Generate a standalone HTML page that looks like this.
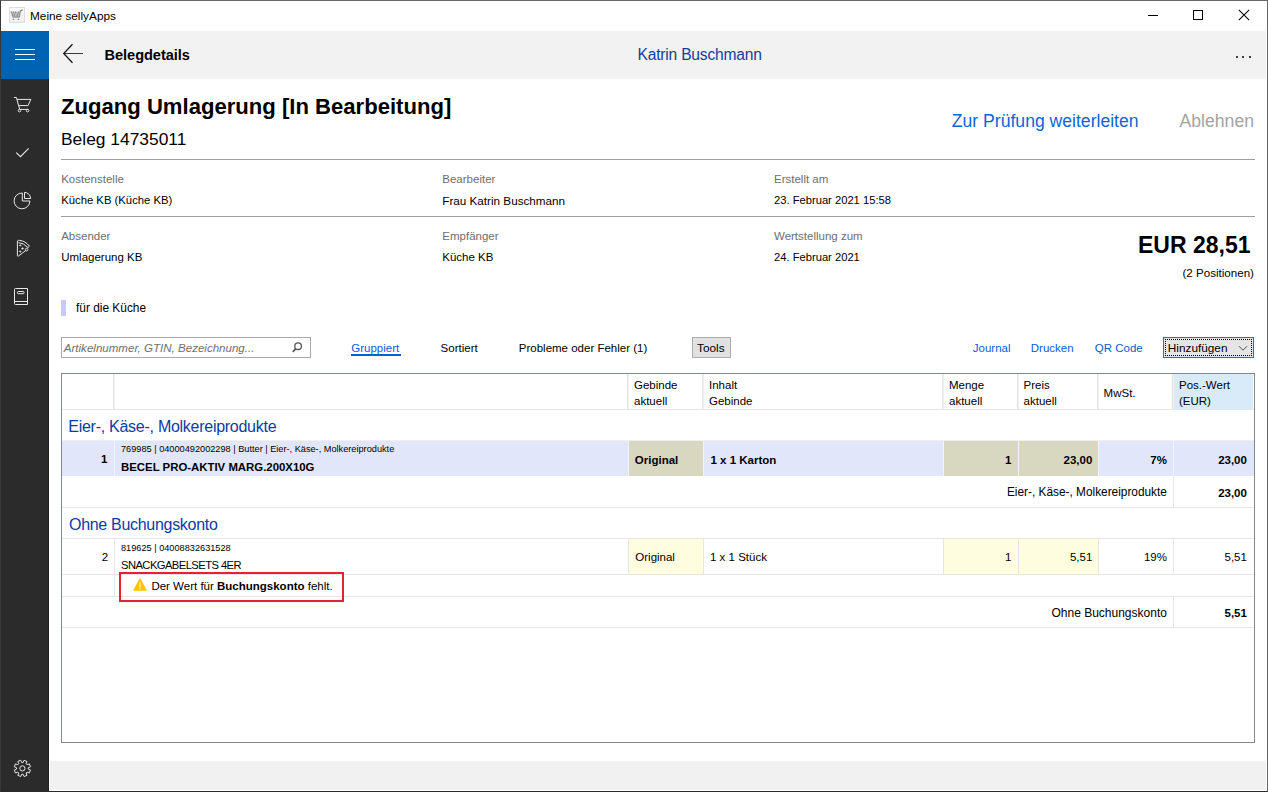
<!DOCTYPE html>
<html><head><meta charset="utf-8">
<style>
*{margin:0;padding:0}
html,body{width:1268px;height:792px;overflow:hidden;background:#fff}
body{font-family:"Liberation Sans",sans-serif;color:#000;position:relative}
.a{position:absolute;white-space:nowrap}
svg.a{overflow:visible}
</style></head><body>
<div class="a" style="left:0px;top:0px;width:1268px;height:792px;background:#fff;border:1px solid #686868;border-left-color:#383838;border-bottom-color:#2a2a2a;box-sizing:border-box"></div>
<svg class="a" style="left:9px;top:7px" width="16" height="16" viewBox="0 0 16 16"><defs><linearGradient id="g1" x1="0" y1="0" x2="0" y2="1"><stop offset="0" stop-color="#fafafa"/><stop offset="1" stop-color="#efefef"/></linearGradient></defs><rect x="0.5" y="0.5" width="15" height="15" fill="url(#g1)" stroke="#dedede"/><path d="M2 4.8 H10.9 L10.1 10.4 H3.5 Z" fill="#c4c4c4"/><g fill="#8e8e8e"><rect x="1.7" y="4.5" width="1.4" height="1.9"/><rect x="3.7" y="4.5" width="1.3" height="1.9"/><rect x="5.9" y="4.5" width="1.3" height="1.9"/><rect x="8.8" y="4.5" width="1.3" height="1.9"/><rect x="2.7" y="6.6" width="1.3" height="2.4"/><rect x="4.9" y="6.6" width="1.2" height="2.4"/><rect x="7.7" y="6.6" width="1.3" height="2.4"/><rect x="3.3" y="9.4" width="7.2" height="1.2"/><path d="M3.3 13 L4.4 11.2 L5.5 13 Z M8.3 13 L9.4 11.2 L10.5 13 Z"/></g><path d="M10.3 10.2 L11.4 4 Q11.7 3.1 13.9 3.2" fill="none" stroke="#8a8a8a" stroke-width="1.2"/></svg>
<div class="a" style="top:10.51px;font-size:11.8px;line-height:11.8px;color:#000;left:30.00px;">Meine sellyApps</div>
<div class="a" style="left:1148px;top:15px;width:10px;height:1px;background:#000;"></div>
<div class="a" style="left:1193px;top:10px;width:10px;height:10px;background:transparent;border:1px solid #000;box-sizing:border-box"></div>
<svg class="a" style="left:1238px;top:9px" width="12" height="12" viewBox="0 0 12 12"><path d="M0.8 0.8L11.2 11.2M11.2 0.8L0.8 11.2" stroke="#000" stroke-width="1.05"/></svg>
<div class="a" style="left:1px;top:31px;width:48px;height:760px;background:#2b2b2b;"></div>
<div class="a" style="left:48px;top:79px;width:1px;height:712px;background:#212121;"></div>
<div class="a" style="left:1px;top:31px;width:48px;height:48px;background:#0063b1;"></div>
<div class="a" style="left:49px;top:761px;width:1px;height:30px;background:#fff;"></div>
<div class="a" style="left:15px;top:49px;width:20px;height:1px;background:#fff;"></div>
<div class="a" style="left:15px;top:54px;width:20px;height:1px;background:#fff;"></div>
<div class="a" style="left:15px;top:59px;width:20px;height:1px;background:#fff;"></div>
<svg class="a" style="left:10px;top:92px" width="26" height="24" viewBox="0 0 26 24" fill="none" stroke="#e8e8e8" stroke-width="1"><path d="M3.9 5.5 H6.4 L9.7 17.4 H17.9"/><path d="M7 7.4 H20.9 L18 13.6 H9"/><circle cx="9.5" cy="18.6" r="1.3"/><circle cx="17.6" cy="18.6" r="1.3"/></svg>
<svg class="a" style="left:10px;top:140px" width="26" height="24" viewBox="0 0 26 24" fill="none" stroke="#e8e8e8" stroke-width="1.1"><path d="M6.2 12.6 L10.5 16.7 L18.6 8.3"/></svg>
<svg class="a" style="left:10px;top:188px" width="26" height="24" viewBox="0 0 26 24" fill="none" stroke="#e8e8e8" stroke-width="1"><path d="M12.3 5 A7.9 7.9 0 1 0 19.9 13 H12.3 Z"/><path d="M14.5 4.4 V10.5 H20.6 A6.1 6.1 0 0 0 14.5 4.4 Z"/></svg>
<svg class="a" style="left:10px;top:236px" width="26" height="24" viewBox="0 0 26 24" fill="none" stroke="#e8e8e8" stroke-width="1"><path d="M7.4 5 V19.6 Q7.6 20.6 8.5 20 L16 14.3"/><path d="M7.4 5 Q8 4.2 9.5 4.3 Q15.5 5 19.4 10.2 L17.9 11.6 Q14 7.2 8.5 6.6"/><circle cx="16.6" cy="13.6" r="1.3"/><path d="M10.3 8.7 l0.7 0.7 l-0.7 0.7 l-0.7 -0.7z M12.5 11.7 l0.8 0.8 l-0.8 0.8 l-0.8 -0.8z M10.3 14.8 l0.7 0.7 l-0.7 0.7 l-0.7 -0.7z" fill="#e8e8e8"/></svg>
<svg class="a" style="left:8px;top:284px" width="26" height="24" viewBox="0 0 26 24" fill="none" stroke="#e8e8e8" stroke-width="1"><path d="M7.5 4.5 H19.5 V20.5 H7.5 Q6.5 20.5 6.5 19.5 V5.5 Q6.5 4.5 7.5 4.5 Z"/><path d="M6.5 17.5 H19.5"/><rect x="9.5" y="7.5" width="6.5" height="2.2" rx="0.8"/></svg>
<svg class="a" style="left:10px;top:756px" width="26" height="24" viewBox="0 0 26 24" fill="none" stroke="#e8e8e8" stroke-width="1"><path d="M13.06 6.54 L14.07 4.27 L16.97 5.47 L16.08 7.79 L17.01 8.72 L19.33 7.83 L20.53 10.73 L18.26 11.74 L18.26 13.06 L20.53 14.07 L19.33 16.97 L17.01 16.08 L16.08 17.01 L16.97 19.33 L14.07 20.53 L13.06 18.26 L11.74 18.26 L10.73 20.53 L7.83 19.33 L8.72 17.01 L7.79 16.08 L5.47 16.97 L4.27 14.07 L6.54 13.06 L6.54 11.74 L4.27 10.73 L5.47 7.83 L7.79 8.72 L8.72 7.79 L7.83 5.47 L10.73 4.27 L11.74 6.54Z"/><circle cx="12.4" cy="12.4" r="2.6"/></svg>
<div class="a" style="left:50px;top:31px;width:1216px;height:48px;background:#f2f2f2;"></div>
<svg class="a" style="left:61px;top:41px" width="26" height="24" viewBox="0 0 26 24" fill="none" stroke="#111"><path d="M3.5 12.5 H22" stroke-width="1" stroke="#3c3c3c"/><path d="M11.5 3.3 L2.7 12.5 L11.5 21.7" stroke-width="1.25"/></svg>
<div class="a" style="top:48.14px;font-size:14.6px;line-height:14.6px;color:#000;font-weight:700;letter-spacing:-0.05px;left:104.50px;">Belegdetails</div>
<div class="a" style="top:47.29px;font-size:15.6px;line-height:15.6px;color:#123da6;letter-spacing:-0.2px;left:637.50px;">Katrin Buschmann</div>
<div class="a" style="left:1236px;top:56px;width:2px;height:2px;background:#000;border-radius:1px"></div>
<div class="a" style="left:1242px;top:56px;width:2px;height:2px;background:#000;border-radius:1px"></div>
<div class="a" style="left:1249px;top:56px;width:2px;height:2px;background:#000;border-radius:1px"></div>
<div class="a" style="left:50px;top:761px;width:1216px;height:29px;background:#f1f1f1;"></div>
<div class="a" style="top:95.79px;font-size:22.1px;line-height:22.1px;color:#000;font-weight:700;left:61.00px;">Zugang Umlagerung [In Bearbeitung]</div>
<div class="a" style="top:130.77px;font-size:17.4px;line-height:17.4px;color:#000;left:61.00px;">Beleg 14735011</div>
<div class="a" style="top:112.60px;font-size:17.6px;line-height:17.6px;color:#0a66d6;left:951.80px;">Zur Prüfung weiterleiten</div>
<div class="a" style="top:112.60px;font-size:17.6px;line-height:17.6px;color:#a3a3a3;left:1179.60px;">Ablehnen</div>
<div class="a" style="left:61px;top:159px;width:1194px;height:1px;background:#a0a0a0;"></div>
<div class="a" style="top:173.77px;font-size:11.5px;line-height:11.5px;color:#6e6e6e;left:61.20px;">Kostenstelle</div>
<div class="a" style="top:194.93px;font-size:11.3px;line-height:11.3px;color:#000;left:61.20px;">Küche KB (Küche KB)</div>
<div class="a" style="top:173.77px;font-size:11.5px;line-height:11.5px;color:#6e6e6e;left:442.30px;">Bearbeiter</div>
<div class="a" style="top:194.60px;font-size:11.7px;line-height:11.7px;color:#000;left:442.30px;">Frau Katrin Buschmann</div>
<div class="a" style="top:173.77px;font-size:11.5px;line-height:11.5px;color:#6e6e6e;left:774.00px;">Erstellt am</div>
<div class="a" style="top:195.02px;font-size:11.2px;line-height:11.2px;color:#000;left:774.00px;">23. Februar 2021 15:58</div>
<div class="a" style="left:61px;top:216px;width:1194px;height:1px;background:#a0a0a0;"></div>
<div class="a" style="top:230.77px;font-size:11.5px;line-height:11.5px;color:#6e6e6e;left:61.20px;">Absender</div>
<div class="a" style="top:251.77px;font-size:11.5px;line-height:11.5px;color:#000;left:61.20px;">Umlagerung KB</div>
<div class="a" style="top:230.77px;font-size:11.5px;line-height:11.5px;color:#6e6e6e;left:442.30px;">Empfänger</div>
<div class="a" style="top:251.77px;font-size:11.5px;line-height:11.5px;color:#000;left:442.30px;">Küche KB</div>
<div class="a" style="top:230.77px;font-size:11.5px;line-height:11.5px;color:#6e6e6e;left:774.00px;">Wertstellung zum</div>
<div class="a" style="top:252.02px;font-size:11.2px;line-height:11.2px;color:#000;left:774.00px;">24. Februar 2021</div>
<div class="a" style="top:234.03px;font-size:23px;line-height:23px;color:#000;font-weight:700;right:17.50px;">EUR 28,51</div>
<div class="a" style="top:266.68px;font-size:11.6px;line-height:11.6px;color:#000;right:14.00px;">(2 Positionen)</div>
<div class="a" style="left:61px;top:300px;width:5px;height:16px;background:#c8c8fd;"></div>
<div class="a" style="top:303.43px;font-size:11.9px;line-height:11.9px;color:#000;left:76.00px;">für die Küche</div>
<div class="a" style="left:61px;top:337px;width:250px;height:21px;background:#fff;border:1px solid #a9a9a9;box-sizing:border-box"></div>
<div class="a" style="top:342.72px;font-size:11.55px;line-height:11.55px;color:#707070;font-style:italic;left:63.80px;">Artikelnummer, GTIN, Bezeichnung...</div>
<svg class="a" style="left:290px;top:340px" width="14" height="14" viewBox="0 0 14 14" fill="none" stroke="#555" stroke-width="1.3"><circle cx="8.1" cy="6.2" r="3.3"/><path d="M5.8 8.6 L2.8 11.8" stroke-width="1.7"/></svg>
<div class="a" style="top:342.77px;font-size:11.5px;line-height:11.5px;color:#0a5dd4;left:351.30px;">Gruppiert</div>
<div class="a" style="left:351px;top:354px;width:50px;height:2px;background:#0a5dd4;"></div>
<div class="a" style="top:342.77px;font-size:11.5px;line-height:11.5px;color:#000;left:440.60px;">Sortiert</div>
<div class="a" style="top:342.77px;font-size:11.5px;line-height:11.5px;color:#000;left:518.80px;">Probleme oder Fehler (1)</div>
<div class="a" style="left:692px;top:337px;width:39px;height:21px;background:#e1e1e1;border:1px solid #adadad;box-sizing:border-box"></div>
<div class="a" style="top:342.51px;font-size:11.8px;line-height:11.8px;color:#000;left:697.00px;">Tools</div>
<div class="a" style="top:342.77px;font-size:11.5px;line-height:11.5px;color:#0a5dd4;left:972.80px;">Journal</div>
<div class="a" style="top:342.77px;font-size:11.5px;line-height:11.5px;color:#0a5dd4;left:1030.80px;">Drucken</div>
<div class="a" style="top:342.77px;font-size:11.5px;line-height:11.5px;color:#0a5dd4;left:1094.80px;">QR Code</div>
<div class="a" style="left:1163px;top:337px;width:91px;height:21px;background:#e5e5e5;border:1px solid #0078d7;box-sizing:border-box"></div>
<div class="a" style="left:1165px;top:339px;width:87px;height:17px;background:transparent;border:1px dotted #000;box-sizing:border-box"></div>
<div class="a" style="top:342.51px;font-size:11.8px;line-height:11.8px;color:#000;left:1167.80px;">Hinzufügen</div>
<svg class="a" style="left:1238px;top:345px" width="10" height="7" viewBox="0 0 10 7" fill="none" stroke="#444" stroke-width="0.9"><path d="M1 1.2 L5 5.2 L9 1.2"/></svg>
<div class="a" style="left:61px;top:373px;width:1194px;height:370px;background:#fff;border:1px solid #828790;box-sizing:border-box"></div>
<div class="a" style="left:1174px;top:374px;width:79px;height:35px;background:#d9eaf8;"></div>
<div class="a" style="left:62px;top:409px;width:1192px;height:1px;background:#e6e6e6;"></div>
<div class="a" style="left:113px;top:374px;width:1px;height:35px;background:#e3e3e3;"></div>
<div class="a" style="left:114px;top:374px;width:1px;height:35px;background:#f0f0f0;"></div>
<div class="a" style="left:627px;top:374px;width:1px;height:35px;background:#e3e3e3;"></div>
<div class="a" style="left:628px;top:374px;width:1px;height:35px;background:#f0f0f0;"></div>
<div class="a" style="left:702px;top:374px;width:1px;height:35px;background:#e3e3e3;"></div>
<div class="a" style="left:703px;top:374px;width:1px;height:35px;background:#f0f0f0;"></div>
<div class="a" style="left:942px;top:374px;width:1px;height:35px;background:#e3e3e3;"></div>
<div class="a" style="left:943px;top:374px;width:1px;height:35px;background:#f0f0f0;"></div>
<div class="a" style="left:1017px;top:374px;width:1px;height:35px;background:#e3e3e3;"></div>
<div class="a" style="left:1018px;top:374px;width:1px;height:35px;background:#f0f0f0;"></div>
<div class="a" style="left:1097px;top:374px;width:1px;height:35px;background:#e3e3e3;"></div>
<div class="a" style="left:1098px;top:374px;width:1px;height:35px;background:#f0f0f0;"></div>
<div class="a" style="left:1172px;top:374px;width:1px;height:35px;background:#e3e3e3;"></div>
<div class="a" style="left:1173px;top:374px;width:1px;height:35px;background:#f0f0f0;"></div>
<div class="a" style="top:379.77px;font-size:11.5px;line-height:11.5px;color:#000;left:634.00px;">Gebinde</div>
<div class="a" style="top:395.77px;font-size:11.5px;line-height:11.5px;color:#000;left:634.00px;">aktuell</div>
<div class="a" style="top:379.77px;font-size:11.5px;line-height:11.5px;color:#000;left:709.00px;">Inhalt</div>
<div class="a" style="top:395.77px;font-size:11.5px;line-height:11.5px;color:#000;left:709.00px;">Gebinde</div>
<div class="a" style="top:379.77px;font-size:11.5px;line-height:11.5px;color:#000;left:949.00px;">Menge</div>
<div class="a" style="top:395.77px;font-size:11.5px;line-height:11.5px;color:#000;left:949.00px;">aktuell</div>
<div class="a" style="top:379.77px;font-size:11.5px;line-height:11.5px;color:#000;left:1023.60px;">Preis</div>
<div class="a" style="top:395.77px;font-size:11.5px;line-height:11.5px;color:#000;left:1023.60px;">aktuell</div>
<div class="a" style="top:387.77px;font-size:11.5px;line-height:11.5px;color:#000;left:1103.60px;">MwSt.</div>
<div class="a" style="top:379.77px;font-size:11.5px;line-height:11.5px;color:#000;left:1179.00px;">Pos.-Wert</div>
<div class="a" style="top:395.77px;font-size:11.5px;line-height:11.5px;color:#000;left:1179.00px;">(EUR)</div>
<div class="a" style="top:418.96px;font-size:16px;line-height:16px;color:#0c3aa8;letter-spacing:-0.27px;left:68.30px;">Eier-, Käse-, Molkereiprodukte</div>
<div class="a" style="left:62px;top:440px;width:1192px;height:1px;background:#f0f0f0;"></div>
<div class="a" style="left:62px;top:441px;width:1192px;height:35px;background:#e1e6fb;"></div>
<div class="a" style="left:629px;top:441px;width:74px;height:35px;background:#d8d8c0;"></div>
<div class="a" style="left:944px;top:441px;width:74px;height:35px;background:#d8d8c0;"></div>
<div class="a" style="left:1019px;top:441px;width:79px;height:35px;background:#d8d8c0;"></div>
<div class="a" style="left:114px;top:441px;width:1px;height:35px;background:#f3f4fb;"></div>
<div class="a" style="left:628px;top:441px;width:1px;height:35px;background:#f3f4fb;"></div>
<div class="a" style="left:703px;top:441px;width:1px;height:35px;background:#f3f4fb;"></div>
<div class="a" style="left:943px;top:441px;width:1px;height:35px;background:#f3f4fb;"></div>
<div class="a" style="left:1018px;top:441px;width:1px;height:35px;background:#f3f4fb;"></div>
<div class="a" style="left:1098px;top:441px;width:1px;height:35px;background:#f3f4fb;"></div>
<div class="a" style="left:1173px;top:441px;width:1px;height:35px;background:#f3f4fb;"></div>
<div class="a" style="top:453.77px;font-size:11.5px;line-height:11.5px;color:#000;font-weight:700;right:1160.50px;">1</div>
<div class="a" style="top:444.71px;font-size:9.2px;line-height:9.2px;color:#000;left:121.00px;">769985 | 04000492002298 | Butter | Eier-, Käse-, Molkereiprodukte</div>
<div class="a" style="top:461.85px;font-size:11.4px;line-height:11.4px;color:#000;font-weight:700;left:121.00px;">BECEL PRO-AKTIV MARG.200X10G</div>
<div class="a" style="top:454.77px;font-size:11.5px;line-height:11.5px;color:#000;font-weight:700;left:634.80px;">Original</div>
<div class="a" style="top:454.77px;font-size:11.5px;line-height:11.5px;color:#000;font-weight:700;left:710.50px;">1 x 1 Karton</div>
<div class="a" style="top:454.77px;font-size:11.5px;line-height:11.5px;color:#000;font-weight:700;right:256.50px;">1</div>
<div class="a" style="top:454.77px;font-size:11.5px;line-height:11.5px;color:#000;font-weight:700;right:175.70px;">23,00</div>
<div class="a" style="top:454.77px;font-size:11.5px;line-height:11.5px;color:#000;font-weight:700;right:101.10px;">7%</div>
<div class="a" style="top:454.77px;font-size:11.5px;line-height:11.5px;color:#000;font-weight:700;right:21.10px;">23,00</div>
<div class="a" style="left:1173px;top:476px;width:1px;height:31px;background:#e6e6e6;"></div>
<div class="a" style="left:62px;top:507px;width:1192px;height:1px;background:#e6e6e6;"></div>
<div class="a" style="top:487.47px;font-size:11.85px;line-height:11.85px;color:#000;right:101.10px;">Eier-, Käse-, Molkereiprodukte</div>
<div class="a" style="top:487.77px;font-size:11.5px;line-height:11.5px;color:#000;font-weight:700;right:21.10px;">23,00</div>
<div class="a" style="top:516.96px;font-size:16px;line-height:16px;color:#0c3aa8;letter-spacing:-0.3px;left:69.00px;">Ohne Buchungskonto</div>
<div class="a" style="left:62px;top:538px;width:1192px;height:1px;background:#e6e6e6;"></div>
<div class="a" style="left:629px;top:539px;width:74px;height:35px;background:#fffddf;"></div>
<div class="a" style="left:944px;top:539px;width:74px;height:35px;background:#fffddf;"></div>
<div class="a" style="left:1019px;top:539px;width:79px;height:35px;background:#fffddf;"></div>
<div class="a" style="left:628px;top:539px;width:1px;height:35px;background:#e6e6e6;"></div>
<div class="a" style="left:703px;top:539px;width:1px;height:35px;background:#e6e6e6;"></div>
<div class="a" style="left:943px;top:539px;width:1px;height:35px;background:#e6e6e6;"></div>
<div class="a" style="left:1018px;top:539px;width:1px;height:35px;background:#e6e6e6;"></div>
<div class="a" style="left:1098px;top:539px;width:1px;height:35px;background:#e6e6e6;"></div>
<div class="a" style="left:1173px;top:539px;width:1px;height:35px;background:#e6e6e6;"></div>
<div class="a" style="left:114px;top:539px;width:1px;height:57px;background:#e6e6e6;"></div>
<div class="a" style="left:62px;top:574px;width:1192px;height:1px;background:#e6e6e6;"></div>
<div class="a" style="left:62px;top:596px;width:1192px;height:1px;background:#e6e6e6;"></div>
<div class="a" style="top:551.77px;font-size:11.5px;line-height:11.5px;color:#000;right:1159.80px;">2</div>
<div class="a" style="top:543.71px;font-size:9.2px;line-height:9.2px;color:#000;left:121.00px;">819625 | 04008832631528</div>
<div class="a" style="top:560.02px;font-size:11.2px;line-height:11.2px;color:#000;letter-spacing:-0.55px;left:121.00px;">SNACKGABELSETS 4ER</div>
<div class="a" style="top:551.77px;font-size:11.5px;line-height:11.5px;color:#000;left:635.30px;">Original</div>
<div class="a" style="top:551.77px;font-size:11.5px;line-height:11.5px;color:#000;left:710.00px;">1 x 1 Stück</div>
<div class="a" style="top:551.77px;font-size:11.5px;line-height:11.5px;color:#000;right:256.50px;">1</div>
<div class="a" style="top:551.77px;font-size:11.5px;line-height:11.5px;color:#000;right:175.70px;">5,51</div>
<div class="a" style="top:551.77px;font-size:11.5px;line-height:11.5px;color:#000;right:101.10px;">19%</div>
<div class="a" style="top:551.77px;font-size:11.5px;line-height:11.5px;color:#000;right:21.10px;">5,51</div>
<div class="a" style="left:119px;top:572px;width:225px;height:30px;background:transparent;border:2px solid #e0262c;box-sizing:border-box"></div>
<svg class="a" style="left:132px;top:577px" width="16" height="15" viewBox="0 0 16 15"><path d="M8 0.8 L15 13.8 H1 Z" fill="#ffc300"/><path d="M8 5.5 V10.6 M8 11.4 V12.4" stroke="#fff" stroke-width="0.9"/></svg>
<div class="a" style="top:580.77px;font-size:11.5px;line-height:11.5px;color:#000;left:151.40px;">Der Wert für <b>Buchungskonto</b> fehlt.</div>
<div class="a" style="left:1173px;top:597px;width:1px;height:30px;background:#e6e6e6;"></div>
<div class="a" style="left:62px;top:627px;width:1192px;height:1px;background:#e6e6e6;"></div>
<div class="a" style="top:607.34px;font-size:12px;line-height:12px;color:#000;right:101.10px;">Ohne Buchungskonto</div>
<div class="a" style="top:607.77px;font-size:11.5px;line-height:11.5px;color:#000;font-weight:700;right:21.10px;">5,51</div>
</body></html>
